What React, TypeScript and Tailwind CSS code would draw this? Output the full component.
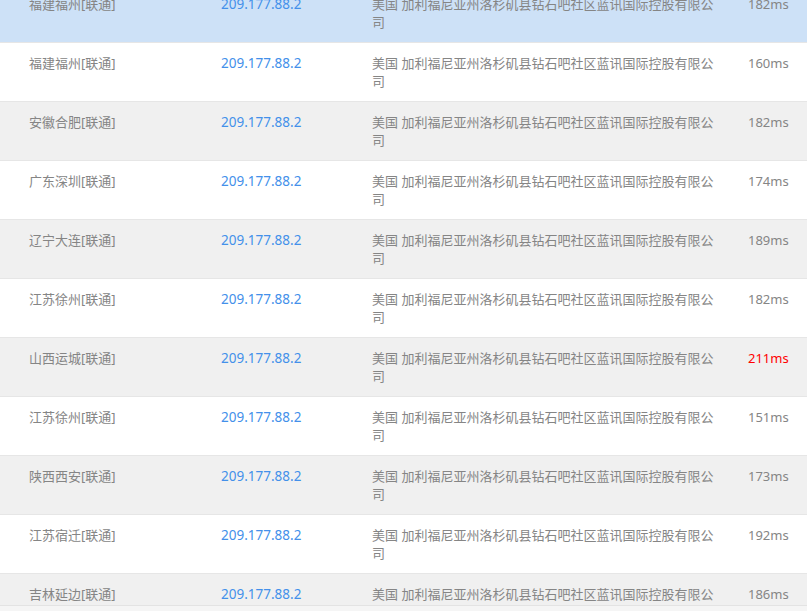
import React from 'react';

type Row = { node: string; ip: string; loc: string; ms: number };

const LOC = '美国 加利福尼亚州洛杉矶县钻石吧社区蓝讯国际控股有限公司';

const rows: Row[] = [
  { node: '福建福州[联通]', ip: '209.177.88.2', loc: LOC, ms: 182 },
  { node: '福建福州[联通]', ip: '209.177.88.2', loc: LOC, ms: 160 },
  { node: '安徽合肥[联通]', ip: '209.177.88.2', loc: LOC, ms: 182 },
  { node: '广东深圳[联通]', ip: '209.177.88.2', loc: LOC, ms: 174 },
  { node: '辽宁大连[联通]', ip: '209.177.88.2', loc: LOC, ms: 189 },
  { node: '江苏徐州[联通]', ip: '209.177.88.2', loc: LOC, ms: 182 },
  { node: '山西运城[联通]', ip: '209.177.88.2', loc: LOC, ms: 211 },
  { node: '江苏徐州[联通]', ip: '209.177.88.2', loc: LOC, ms: 151 },
  { node: '陕西西安[联通]', ip: '209.177.88.2', loc: LOC, ms: 173 },
  { node: '江苏宿迁[联通]', ip: '209.177.88.2', loc: LOC, ms: 192 },
  { node: '吉林延边[联通]', ip: '209.177.88.2', loc: LOC, ms: 186 },
];

export default function App() {
  return (
    <div
      className="relative h-[611px] w-[807px] overflow-hidden bg-white text-[13px] leading-[18px] text-[#858585]"
      style={{ fontFamily: '"Noto Sans", "Noto Sans CJK SC", sans-serif' }}
    >
      {/* list is scrolled a little, first row cut at the top */}
      <div className="-mt-[16px]">
        {rows.map((r, i) => {
          // first row is the hovered one, rest alternate white / grey
          const bg = i === 0 ? 'bg-[#cde1f7]' : i % 2 === 0 ? 'bg-[#f0f0f0]' : 'bg-white';
          return (
            <div
              key={i}
              className={`grid grid-cols-[221px_151px_376px_1fr] border-b border-[#e6e6e6] ${bg}`}
            >
              <div className="h-[58px] py-[11px] pl-[29px]">{r.node}</div>
              <div className="py-[11px] text-[13.5px] text-[#4390ea]">{r.ip}</div>
              <div className="py-[11px] pr-[30px]">{r.loc}</div>
              <div className={`py-[11px] ${r.ms > 200 ? 'text-[#ff0000]' : ''}`}>{r.ms}ms</div>
            </div>
          );
        })}
      </div>
      {/* horizontal scrollbar track */}
      <div className="absolute bottom-0 left-0 h-[6px] w-full border-t border-[#e3e3e3] bg-[#f5f5f5]" />
    </div>
  );
}
